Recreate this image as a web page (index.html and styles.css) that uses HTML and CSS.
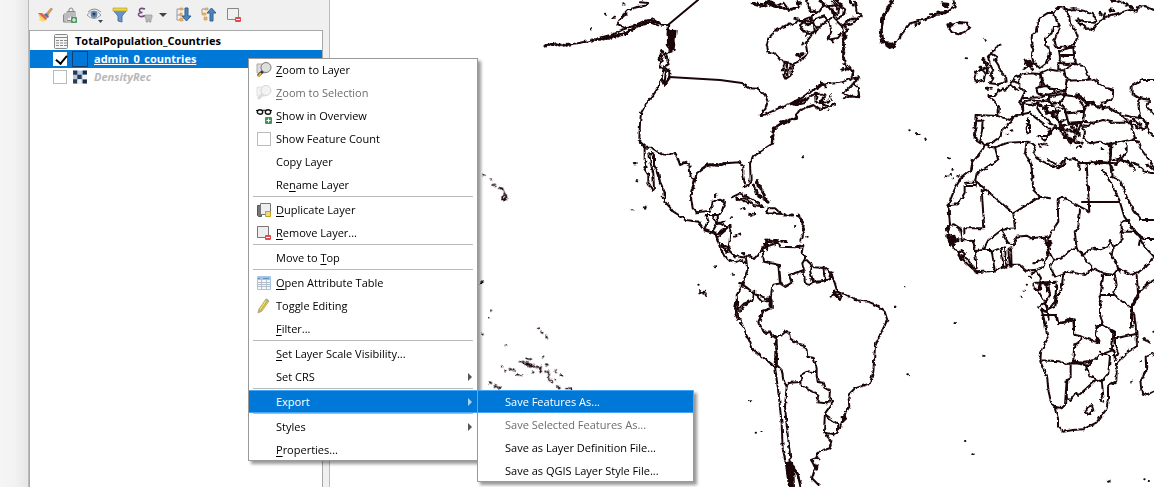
FILE: index.html
```html
<!DOCTYPE html>
<html lang="en">
<head>
<meta charset="utf-8">
<title>Layers</title>
<link rel="stylesheet" href="styles.css">
</head>
<body>
<div class="app">
  <div class="gutter"></div>
  <aside class="panel">
    <div class="toolbar">
      <button aria-label="Style"><svg class="icon" viewBox="0 0 16 16"><path d="M9 7l5-6 1.500 1-4.500 6z" fill="#d9a15b" stroke="#b57a35" stroke-width=".6"/><path d="M1 6l8 1 2 3-3 4-4-1z" fill="#f2c53d"/><path d="M1 6l4 0 5 5-1 2z" fill="#e2605a"/><path d="M3 10l4 2-1 3-4-2z" fill="#f4dc79"/><path d="M9 6l3 3-1 2-4-3z" fill="#4b74b5"/></svg></button>
      <button aria-label="Add group"><svg class="icon" viewBox="0 0 16 16" fill="none" stroke="#888"><path d="M5 4.500h8v9H5zM3 6v9h8M1.500 7.500V15H3M7 11V3a2 2 0 0 1 4 0v6a1 1 0 0 1-2 0V4"/><rect x="9" y="10" width="6" height="6" rx="1" fill="#4c9a62" stroke="none"/><path d="M12 11v4M10 13h4" stroke="#fff"/></svg></button>
      <button aria-label="Map themes"><svg class="icon" viewBox="0 0 16 16"><path d="M0 8q7-8 14 0-7 7-14 0z" fill="#f5f5f5" stroke="#999"/><path d="M1 5q6-6 13 0" fill="none" stroke="#888"/><circle cx="7" cy="7.500" r="3.400" fill="#6289b6"/><circle cx="7" cy="7" r="1.500" fill="#233f60"/><path d="M11 13h5l-2.500 3z" fill="#444"/></svg></button>
      <button aria-label="Filter"><svg class="icon" viewBox="0 0 16 16"><path d="M1 3h14l-5 6v6l-4-1V9z" fill="#6692c4" stroke="#4a78ac"/><path d="M1 1h14v3H1z" fill="#f1d43e" stroke="#b6a136" stroke-width=".7"/></svg></button>
      <button aria-label="Filter by expression"><svg class="icon wide-icon" viewBox="0 0 30 16"><path d="M8 2Q2 0 2.500 4q.5 1.500 3 1.500Q1 5.500 1.500 8 3 11 8 8.500" fill="none" stroke="#71477d" stroke-width="1.600"/><path d="M8 8h7v3l-1 1v3h-2v-3h-1v3H9v-3l-1-1z" fill="#bbb" stroke="#999" stroke-width=".7"/><path d="M22 6h8l-4 4z" fill="#444"/></svg></button>
      <button aria-label="Expand all"><svg class="icon" viewBox="0 0 16 16"><path d="M1 2h3M1 2v11h3M1 8h3" stroke="#999" fill="none"/><path d="M4 1h3v2H4zM4 6h2v3H4zM4 11h3v3H4z" fill="#e7b66d" stroke="#d59b50" stroke-width=".7"/><path d="M9 1h3v8h3L10.500 14 6 9h3z" fill="#4e85bd" stroke="#315f8f"/></svg></button>
      <button aria-label="Collapse all"><svg class="icon" viewBox="0 0 16 16"><path d="M1 2h3M1 2v4" stroke="#999" fill="none"/><path d="M4 1h3v2H4zM1 6h4v2H1zM3 10h3v3H3z" fill="#e7b66d" stroke="#d59b50" stroke-width=".7"/><path d="M9 14h3V6h3L10.500 1 6 6h3z" fill="#4e85bd" stroke="#315f8f"/></svg></button>
      <button aria-label="Remove layer"><svg class="icon" viewBox="0 0 16 16"><path d="M1.500 1.500h11v11h-11z" fill="#f0f0f0" stroke="#888"/><rect x="9" y="10" width="6" height="5" rx="1" fill="#e24850"/><path d="M10 12.500h4" stroke="#fff"/></svg></button>
    </div>
    <ul class="tree">
      <li><svg class="icon" viewBox="0 0 16 16" fill="none" stroke="#888"><rect x="1.500" y="1.500" width="13" height="14" rx="1" fill="#f6f6f6"/><path d="M2 4.500h12M3 7.500h3M7 7.500h3M11 7.500h3M3 10h3M7 10h3M11 10h3M3 12.500h3M7 12.500h3M11 12.500h3"/></svg><span class="table-name">TotalPopulation_Countries</span></li>
      <li class="selected"><input type="checkbox" id="admin" checked><span class="swatch"></span><label for="admin">admin_0_countries</label></li>
      <li class="hidden-layer"><input type="checkbox" id="density"><svg class="raster" viewBox="0 0 15 14"><path d="M1 1h13v12H1z" fill="#b4c9e2"/><path d="M1 1h4v4H1zM5 5h4v4H5zM1 9h4v4H1z" fill="#293b55"/><path d="M10 1h4v4h-4zM10 9h4v4h-4z" fill="#1d2b40"/><path d="M5 9h4v4H5zM10 5h4v4h-4z" fill="#eef3f8"/></svg><label for="density">DensityRec</label></li>
    </ul>
  </aside>
  <main class="map">
    <svg viewBox="330 0 824 487" preserveAspectRatio="xMinYMin slice" role="img" aria-label="World map">
      <filter id="rough" x="330" y="0" width="824" height="487" filterUnits="userSpaceOnUse" color-interpolation-filters="sRGB"><feTurbulence type="fractalNoise" baseFrequency=".22" numOctaves="2" seed="4"/><feDisplacementMap in="SourceGraphic" scale="4" xChannelSelector="R" yChannelSelector="G"/></filter>
      <path d="M669 77l51 3 22 3M698 0l-30 25M1082 202h37"/>
      <g filter="url(#rough)">
      <!-- Alaska and western North America -->
      <g transform="translate(480 0) scale(.3333)">
        <path d="M262 135l20-4 43-7 35-11 40-10 30-15 30-10 35-16 27-4 23 16 20 2M335 120l45-7 60-15 35-18 35-12 25 8M410 95l30-10-28-13 13-22 15-18 30-10 25-5 10-8-25-2M545 235l-10 27-15 23-20 23-17 32-3 30-2 50 16 15v8h21l30 20 25 2 2-5 16 2 12 33 20-7 8 7 4 35 13 10 5-20 20-15 20-12 30 4M645 540l-10 30-5 30M494 443v37l6 20-10 2 15 23v25l13 22 4-4-2-48-8-30-4-28 7-7 7 10v30l13 25 5 30 15 30v20"/>
        <path class="fill" d="M563 85l10 8 14-1-6 55-12 5-5-20z"/>
        <path d="M568 75l-5 30 18-10-8 25 12 5-25 10 15 20-17 5 8 35-14 5 16 15v20l-13 20-10-20 5-25-10-10 8-30 8-15M548 205l10 10-5 35 12-15"/>
        <path class="coast" d="M195 138l10-5 55 3M335 120l55-5 50-15 28-20 28-12 30-3 14 4M545 155l-10 32M428 52l14-13M478 425l12 10"/>
        <path class="dots" d="M333 88l4-6M375 41h1M400 53h8M430 12l8 3M466 489h1M470 544h1M707 588h1M545 590l4 5"/>
      </g>
      <!-- Eastern North America and Greenland -->
      <g transform="translate(700 0) scale(.3333)">
        <path d="M125 250l25 15 25 1 20 19 8 20-6 20-15 20 13-1 40-19 35-13 40-22 50-35 60-7 35-12 22-5-17 20-30 30 20 8 28 3-4-30-16-12 20-14M0 510l20-15 40 2 15-7 45-3 10 13v30l5 20-7 12 17-4 7-18-2-50 10-20 25-18 30-20 3-37 17-20 55-20-2-10 12-15 40-15 20 15 45-20-20 10-35-15-2-25-65 35M272 312l55-20-15 18-25 5zM270 70l-40 20-25 25-5 20 5 20 20 5 15 20 22 4-2 25-10 15 8 12 14-10 10-35 25-12 15-20-5-30 15-20 12-20-5-30 35-10 15 20 5 25-10 25 30-5 15-20-3-15-25-25-5-20 15 20 20-7 5-18-20-15-30 5M430 110v70l10 20 20 15-8 25M255 80l40-15 40-15 25-20 10-20-10-15M345 100l10-18 25-20 35-20 3-20-15-20M427 110l15-20-10-15 25-5 28-20-15-15-5-30M580 0l-15 30-15 25-5 35 5 35 30 15 20-30 30-40 20-5 40-12 25-15 29-3M350 80l-30-20-20 15 10 20M395 5l20 25 10-15-15-15"/>
        <path class="coast" d="M218 430l2-45 25-18M290 355l-55 12M160 10l35 5 10-10 30 15 35 10 25-10 5-15M320 0l10 30 15 5M360 5l30 20 20 15M285 55l45 20 5-25M310 90l20 10 15-5M250 210l5-25 20 10-15 30M290 165l20-5-15 15M430 75l15-15 25-5M450 5l15 15M575 5l-15 25-15 25-3 65M350 280l25 5-15 25 30-8M425 210l25-7M430 293l25-5M365 250l15 15M330 275l35-20M430 112l2 75M645 75l15-5"/>
        <path d="M155 12l30 8 15-15 25 15 25-12 15 20 30-5-5-20M205 0l5 15 30 5"/>
        <path class="fill" d="M545 125l30 3 7 12-10 4zM430 100l10 10-8 6z"/>
        <path class="dots" d="M308 472h1M388 330h1M628 391h1M648 403l15-2M676 413l4 10M310 130l-5 6M318 108l5-5M390 285l6 15M395 120l5 5M48 587h1"/>
      </g>
      <!-- Central America and northern South America -->
      <g transform="translate(640 150) scale(.3333)">
        <path d="M50 65l10 30 13 30 2 30 25 30 40 25 35 5 15 20 35 12 15 45 15 30 30 15 20-8 12 10M165 90l-12 50 5 35 12 12 40-5 8-27 22-6 15 6-10 30-12 15 2 18 20 10 17 0-3 45-5 25 20 20 35 5 8-8 15 12 30-35 30-10M318 325l4 35-17 50M200 195h30M200 195l5 20-15 25 25 8 15-25 20-8M215 248l20 2 30-20M232 262l33-28M245 285l25 10M385 275l-18 15 5 45 45 10 5 55-25 5-5 45-50-20-25-20-20-10M385 275l30 5 5 10 45 2 25-5-5 20 12 20 25 25 40 3 15 20 15 50M415 345l5 55 15 10 20-12-8-23 45-15-5-20 12-20M490 355l5 45 15 5 10-8-10-35 5-20M525 395l30-3-5-40M550 392l20-5 5-20M525 395l-15-8M305 410l-15 25 3 45 20-20 25-10 5-28M340 425l25 30 25-2 5 20-30 10-5 27M290 475l-5 15 10 20M575 440l10-15 20 5-5 20-15-15 25-5 30 15"/>
        <path d="M275 142l25-12 40 20 30 20-30-5-25-20-25 5M385 175l-5 15 45 2-20-17z"/>
        <path class="coast" d="M330 193h15M432 195h30M475 195l14 25 2 25-10 30M350 95l15 25 15 30M340 105l15 30 30 22M390 270l50 5M380 270v35M475 290l15-5M218 200l12 20M245 287l22 27M283 318l7 8M310 308l5 12M290 145l35 15M580 430l20 15M390 440v30M205 45l40-2 15-5"/>
        <path class="dots" d="M488 22h1M228 136h1M272 202h1M300 179l14-4M465 228h1M502 260h1M285 260l20-8M225 352h1M278 374h1M175 404h1M178 430l15-5 5 12M795 412h1M765 470h1M15 176l2-6M66 140l5 4M180 423l10 8"/>
      </g>
      <!-- Southern South America -->
      <g transform="translate(700 300) scale(.3333)">
        <path d="M110 0l-5 25 55 125 65 50 10 75 10 95 3 75 10 45 15 20 5 77M105 25l15 10 15-20 15-12M215 0v25l-25 10-15 30 10 25 15 10 10-6 5 15 15 1 15-5 15-12 8 10 2 12 20 15 20 5 10 15 2 20 20 5 8 30v20l3 20 15 3 5 15 17 10-3 30-10 7-25-3 3-23-50-25-2-35 20-10 25 3M230 110v85l15 15 5 30 10 20 10-12 30-2M260 260l-5 60 5 55 8 70 5 50 20 25 8 40M390 290l10 15-25 35-3 55 22 30-5 20-33 10-8 20-15 5 13 22-10 33 20 20M375 345l40 28-2 25-10 5-30-5M420 385l10-35 18-30-3-35 20-20 45-15 10-35 5-75 15-35 22-45-8-25-25-20-25-10-40-5"/>
        <path class="fill" d="M258 490l18-3 4 30 2 43h-15l-5-35zM425 350l10-5 2 12-10 10zM341 495l12 2-3 12z"/>
        <path class="coast" d="M225 110l6 45-3 45M350 460l5 15M260 490l20 10 18 40"/>
        <path class="dots" d="M150 304h1M167 398h1M184 396h1M585 20h1M622 223h6M465 3l8 2"/>
      </g>
      <!-- Europe and western Asia -->
      <g transform="translate(930 0) scale(.3333)">
        <path d="M0 43L45 40 75 20 70 0M52 75L75 72 85 66 112 68 118 82 105 95 85 103 65 97zM310 185L305 165 310 150 304 135 306 105 318 95 322 70 332 52 355 38 372 40 382 25 400 22 415 30 432 27 460 32 485 42 498 55 495 68 470 66 445 58M440 62L455 72 470 85 490 88 500 75 508 65 520 58 525 40M520 58L545 45 570 38 600 30 620 35 625 20 645 18 672 30M372 42L380 60 385 75 372 80 368 100 345 115 345 135 355 142 360 165 350 190 330 205 318 195 310 185M385 75L390 85 380 105 372 125 375 142 400 140 420 140 435 128 443 110 435 90 420 70 418 50 412 35M435 142L408 146 388 155 390 175 385 192 385 210M430 142L432 165 438 190 410 192 385 188M395 165L432 165"/>
        <path d="M332 218L355 208 380 212 402 210 410 240 405 270 385 268 345 258 335 240zM402 210L435 192 462 198 470 215 478 232 465 240 410 242M410 242L405 285 440 290 455 288 470 310 490 305 500 320 515 318M465 240L490 238 505 248 530 265 550 270 548 295 530 305 512 308 518 325 535 322M268 225L300 220 330 222 335 258 318 265 325 282 345 288 330 292 275 295 285 275 268 260zM268 225L252 235 238 255 265 270M250 245L268 250M238 255L228 268 205 275 195 288 175 288 190 300 207 320 205 345M275 295L270 310 278 320 275 345 250 350 240 360 205 348 140 345M278 308L300 300 330 305 355 300 360 285 345 282M318 265L345 258 375 270 370 280 345 285 325 280zM355 300L365 288 395 282 405 290 390 308 365 312zM370 280L405 272 400 288"/>
        <path d="M275 345L280 330 278 312 300 315 325 310 322 325 335 345 355 362 375 378 382 385 368 383 362 400 352 410 360 392 340 370 315 352 298 338 280 342M325 408L352 408 345 422zM290 375h10v25h-10zM294 355v14M335 315L350 330 370 350 388 368 392 395 408 415 425 430M345 318L375 318 385 345 370 352M385 320L405 330 412 355 395 365M405 330L415 340 462 335 460 365 415 368 412 355M440 290L462 320 462 335M390 308L410 330M392 395L400 375 430 372 455 368 440 400M460 365L490 368 520 360 550 368 580 368 595 365 575 345 535 322M462 335L472 310M455 375L465 395 460 415 480 430 510 425 535 435 560 428 600 420 615 415 605 375 595 365M455 375L475 378 490 368M140 345L138 370 132 405 138 420 155 430 170 432 190 425 212 410 215 390 245 365 250 352M140 362h18l-2 30-5 30M580 345L605 350 635 355 655 370M600 365L620 380 640 390 655 370M672 240L635 240 605 258 605 280 630 295 625 315 630 345 650 375 655 395 672 410M630 295L660 300 650 320 672 345"/>
        <path d="M125 510L130 485 160 445 165 432 180 440 195 442 235 428 290 425 305 428M195 442L205 480 180 495M290 425L285 460 300 485 308 505M305 428L318 440 310 460 320 475 350 490 385 505 402 495 405 478 430 475 450 488 500 490 540 490M448 488V510M545 430L540 490 550 510M550 480L575 475 590 455 590 430M600 420L628 425 635 450 672 500M575 480L600 490 615 510M180 250L205 253 230 245 228 230 212 215 205 195 195 180 200 170 185 160 175 175 180 195 190 210 180 225 190 235zM138 215L155 205 165 220 162 240 142 248 133 235z"/>
        <path class="coast" d="M160 175l15 30-5 15M175 170l32-35M285 180l25 35M285 205l30-15M290 185l20 5M330 315l45 30 15 25M350 340l35-5M425 380l25 30M390 365l20 45 20 15 30 5M410 390l40 10M440 375l-5 45M205 270l20-5M440 285l20 15 15 15M485 310l25 15M541 435v60M510 40l15 10M540 30h15M465 85l25 5M620 380l20 5M610 360l25 15M548 0l40 10 20 15M170 265h20M150 205h35M135 370v45"/>
        <path class="fill" d="M285 190l12-8 10 10-7 8zM35 10l20 2-5 10zM55 70l8 0-3 12z"/>
        <path class="dots" d="M163 119l7 5M110 175h1M356 180l2-10M400 165l3 10M325 430l25 5M330 440h1M440 443l20-3M515 447h12M55 474l8 2M67 509h1M230 402h3M245 392l8-2"/>
      </g>
      <!-- North and central Africa -->
      <g transform="translate(930 160) scale(.3333)">
        <path d="M128 0l-5 30-30 25-18 30-20 50 5 60-10 10 15 50 40 50 35 32 55-5 45-18 28 0 20 18 30-3 15 25-8 40 18 30 10 25 3 30M135 65l5-25 40-25 25-15M105 68h30M103 78h30M137 65v15M104 78v20l-20 35-32 3M140 65l110 95 80-50-20-20-5-65-5-25M155 90l8 115h-60v15M165 90l-10 5M250 160l5 45-40 5-40 30-15 30-25 3-5-30-35-3-5-35-18-12-12 2-10 20M215 210l15 35 20 10 10-25 30-3 15 8 40-5 15 0 5-15 20-30-2-65 10-10 85 45-8-145 35-5 50 5 15-15 1-8M330 110l30 5M355 0l35 20 10-20M518 30l25 40 25 50 15 50 30 40 20 25M545 50l25 10 20 50 20 40 25 30M540 0l5 50M555 15l20-15 50 15 20 20 27 5M450 150l-5 50-10 20 5 45 20 20 25-20 20 5 30-10 5-20 10 20-5 25 25 50M550 290l-10-10M565 325l-15 20-35 0M565 325l40 20 20-10 12-5 35-40M630 180h42M640 237h32M580 215h35l15 20-3 20M595 180l-20 5v55l-25 25M630 235l10 20 32 35M455 285l35 40 30 15 30 5M355 235v45l-15 40-35 20M360 280l10 20 25-5 20-20 25-15M370 300l-10 20 15 30 40-15 50 10 25-20M310 310l30-10M315 368l65-3-5 60-25 30-15-5M400 340l-5 45-15 30-5 25-30 15M330 370l25 0 5 35-15 25-20 10M310 375l5 15 15 0 2-20M340 465h35l10 25 25-5 10-10 15 5v30M520 345l-5 35-5 40 0 45 10 30-20 5 0 15M555 345l5 30-10 30h-35M550 405l55 40 20-35-5-65M605 440l20-40 30-30 17-10M195 335l-10-60 30-12 5 60M135 275l5 50M85 280l10-10 10 10-10 20-10-15 25 10 15 20 10 20M165 270h20M225 265l5 55M240 320l-5-50 10-5M245 320l-2-55M345 235l10 40-5 15"/>
        <path class="coast" d="M55 235l20-3M60 250l15 5M605 200l15 20 20 15M355 230l8 40M510 410l2 40M50 228l40 13M650 15l20 10M605 450v50M345 370l10 20"/>
        <path class="fill" d="M53 230l20-3 5 15-18 12z"/>
        <path class="dots" d="M45 50l15-5M85 50l3-10M68 55h1M300 350l8 8M281 392h1M272 410h1M290 374h1M74 490h1"/>
      </g>
      <!-- Southern Africa -->
      <g transform="translate(930 310) scale(.3333)">
        <path d="M335 0l10 40 8 45-20 40-2 30 20 45 5 45 8 35 10 10 10 35v25l15 15 30-5 30-2 40-20 30-40 5-30 0-40 25-15 2-55 30-30 30-20-2-45-5-40-8-40M335 15h45l5 25 20-3 5-10 20 5 3 42 20 5-5 20-15 5-3 45 15 12 30-5 10-5M333 151l55 3 20 8 45-4M453 80l30 10 20 10 5-8-10-15 2-30 15-5 30 20 5 15-5 45-40 15-30 30-25-5M545 60l10 5 0 40 10 25-10 20-5-30-10-5M555 85l60-12M510 125l30 15-5 50-20 25-35-15-15-40M497 210l-50 45-10-5-15 20-12-5 2-55 10-5v-45M375 290l20 5 10-10 5-75M515 210l5 50M515 260l-5 10 10 8M485 285l5 15-15 15-10-8 8-15z"/>
        <path d="M672 130l-25 10 2 40-18 35 5 35 15 5 21-10"/>
        <path class="coast" d="M430 155l30 5M500 90l8 10M605 0v50M335 0l20 5"/>
        <path class="dots" d="M74 40h1M160 137h1M105 393h1M127 433h1M534 515l5-1M643 508h1M656 513h1M640 85l15 10M632 153h1M604 215h1M645 90l15 8M670 65h1"/>
      </g>
      <!-- Pacific islands -->
      <g transform="translate(478 150) scale(.3333)">
        <path class="dots" d="M16 77h1M38 88h1M46 105l10-2M65 113l8 5M470 40h1M476 94h1M462 181h1M501 175l2-5M38 482h1M31 505h1M16 553h1M83 587h1M183 535h1M190 545l5 6M205 560l3 8M195 620h1M145 626l14 2M72 650h1M82 664h1M188 667v-20M165 667h1M204 643l8 2M202 665h1M233 663h1M248 676l10 2M233 688h1M240 711h5M264 717l14 1M35 697l10 5M122 633l35 10 25 12 8 12M95 657l15 5M117 673l13 3M50 708l15 6M210 665v20l12 12M150 640l10 10M135 635l20 15M72 115l8 15"/>
        <circle cx="79" cy="143" r="6"/><circle class="fill" cx="12" cy="396" r="2"/>
      </g>
      </g>
    </svg>
  </main>
</div>

<ul class="menu context-menu">
  <li><button><svg class="icon" viewBox="0 0 16 16"><path d="M1 2h8v9H1z" fill="#ddd" stroke="#aaa"/><path d="M7 9l-5 5" stroke="#333" stroke-width="3"/><path d="M5 11l-3 4" stroke="#efb942" stroke-width="2"/><circle cx="10" cy="5.500" r="5" fill="#dedfdc" stroke="#777"/></svg><span><u>Z</u>oom to Layer</span></button></li>
  <li><button disabled><svg class="icon" viewBox="0 0 16 16" opacity=".35"><path d="M1 2h8v9H1z" fill="#ddd" stroke="#aaa"/><path d="M7 9l-5 5" stroke="#999" stroke-width="3"/><circle cx="10" cy="5.500" r="5" fill="#dedfdc" stroke="#888"/></svg><span><u>Z</u>oom to Selection</span></button></li>
  <li><button><svg class="icon" viewBox="0 0 16 16" fill="none" stroke="#111"><path d="M0 2.500h2M6 3q2-2 4 0M14 2.500h2"/><ellipse cx="4" cy="4" rx="2.700" ry="2.200" stroke-width="1.400"/><ellipse cx="12" cy="4" rx="2.700" ry="2.200" stroke-width="1.400"/><rect x="9" y="9" width="7" height="7" rx="1" fill="#48905d" stroke="none"/><path d="M12.500 10.500v4M10.500 12.500h4" stroke="#fff"/></svg><span><u>S</u>how in Overview</span></button></li>
  <li class="check-item"><input type="checkbox" id="count"><label for="count">Show Feature Count</label></li>
  <li><button><span class="icon"></span><span>Copy Layer</span></button></li>
  <li><button><span class="icon"></span><span>Re<u>n</u>ame Layer</span></button></li>
  <li class="separator"></li>
  <li><button><svg class="icon" viewBox="0 0 16 16"><path d="M1.500 3.500h4v11h-3l-1-1z" fill="#777" stroke="#555"/><path d="M4.500 1.500h10v11h-10z" fill="#eee" stroke="#777"/><path d="M9.500 9.500h5v5h-5z" fill="#eedb7c" stroke="#c79f20"/></svg><span><u>D</u>uplicate Layer</span></button></li>
  <li><button><svg class="icon" viewBox="0 0 16 16"><path d="M1.500 1.500h11v11h-11z" fill="#eee" stroke="#777"/><rect x="9" y="10" width="6" height="5" rx="1" fill="#e24850"/><path d="M10 12.500h4" stroke="#fff"/></svg><span><u>R</u>emove Layer...</span></button></li>
  <li class="separator"></li>
  <li><button><span class="icon"></span><span>Move to <u>T</u>op</span></button></li>
  <li class="separator"></li>
  <li><button><svg class="icon" viewBox="0 0 16 16"><rect x="1" y="1" width="14" height="14" rx="1" fill="#a7c4e3"/><path d="M2 5h3v9H2zM6 5h4v9H6zM11 5h3v9h-3z" fill="#f4f7fb"/><path d="M2 3.500h2M7 3.500h6" stroke="#5d8fc3"/><path d="M2 7.500h12M2 9.500h12M2 11.500h12" stroke="#b4bfca"/></svg><span><u>O</u>pen Attribute Table</span></button></li>
  <li><button><svg class="icon" viewBox="0 0 16 16"><path d="M2 15l1-4 7-10 3 2-7 10z" fill="#eddb66" stroke="#9d913c" stroke-width=".7"/><path d="M5 12l7-10" stroke="#b9a636"/><path d="M9 2l1-1.500L13 2l-1 2zM2 15l1-4 3 2z" fill="#aaa"/></svg><span>Toggle Editing</span></button></li>
  <li><button><span class="icon"></span><span><u>F</u>ilter...</span></button></li>
  <li class="separator"></li>
  <li><button><span class="icon"></span><span><u>S</u>et Layer Scale Visibility...</span></button></li>
  <li class="parent"><button><span class="icon"></span><span>Set CRS</span></button></li>
  <li class="separator"></li>
  <li class="parent open"><button class="active"><span class="icon"></span><span>Export</span></button>
    <ul class="menu submenu">
      <li><button class="active">Save Features As...</button></li>
      <li><button disabled>Save Selected Features As...</button></li>
      <li><button>Save as Layer Definition File...</button></li>
      <li><button>Save as QGIS Layer Style File...</button></li>
    </ul>
  </li>
  <li class="separator"></li>
  <li class="parent"><button><span class="icon"></span><span>Styles</span></button></li>
  <li><button><span class="icon"></span><span><u>P</u>roperties...</span></button></li>
</ul>
</body>
</html>
```
FILE: styles.css
```css
* { box-sizing: border-box; }
body { margin: 0; font: 11px/18px "Open Sans", "Noto Sans", sans-serif; color: #000; background: #fff; overflow: hidden; }
ul { list-style: none; margin: 0; padding: 0; }
button { font: inherit; color: inherit; background: none; border: 0; padding: 0; text-align: left; }
input { appearance: none; width: 14px; height: 14px; margin: 0; border: 1px solid #bbb; background: #fff; flex: none; }
.icon { width: 16px; height: 16px; flex: none; display: block; }
.app { display: grid; grid-template-columns: 29px 301px 1fr; height: 100vh; }
.gutter { background: linear-gradient(90deg, #f5f5f5, #f3f3f3 50%, #e6e6e6); border-right: 1px solid #bbb; }
.panel { display: flex; flex-direction: column; padding-right: 6px; background: #f0f0f0; border-right: 1px solid #bbb; }
.toolbar { display: flex; gap: 9px; height: 30px; padding: 6px 8px; }
.wide-icon { width: 30px; }
.tree { flex: 1; background: #fff; border: 1px solid #a8a8a8; border-bottom: 0; padding-top: 1px; }
.tree li { display: flex; align-items: center; gap: 5px; height: 18px; padding-left: 23px; }
.table-name, .tree label { font-weight: 700; padding-left: 1px; }
.tree .selected { background: #0078d7; color: #fff; }
.selected label { text-decoration: underline; }
.hidden-layer label { font-style: italic; color: #b8b8b8; }
.swatch, .raster { width: 16px; height: 16px; flex: none; }
.swatch { border: 1px solid #123d70; }
input:checked { border-color: #fff; }
input:checked::after { content: ""; display: block; width: 5px; height: 9px; margin: 0 0 0 4px; border: solid #000; border-width: 0 2px 2px 0; transform: rotate(40deg); }
.map { overflow: hidden; }
.map svg { display: block; width: 100%; height: 100%; fill: none; stroke: #1a0508; stroke-width: 2; stroke-linejoin: round; stroke-linecap: round; }
.map g g { stroke-width: 6; }
.map .fill { fill: #1a0508; }
.map .coast { stroke-width: 9; stroke-dasharray: 4 9 1 8; }
.map .dots { stroke-width: 6; stroke-dasharray: 5 7; }
.menu { position: absolute; background: #fff; border: solid #999; border-width: 0 1px; box-shadow: inset 0 1px #999, inset 0 -1px #999, 3px 3px 3px #0006; }
.context-menu { left: 248px; top: 58px; width: 230px; }
.submenu { left: 228px; top: 0; width: 217px; }
.menu li { position: relative; }
.menu button, .check-item { display: flex; align-items: center; gap: 4px; width: 100%; height: 23px; padding-left: 7px; }
.check-item input { margin: 0 1px; }
.menu .submenu button { padding-left: 27px; }
.menu button:disabled { color: #6d6d6d; }
.menu .active { background: #0078d7; color: #fff; box-shadow: inset 0 1px #42a5f5, inset 0 -1px #42a5f5; }
.menu .separator { height: 2px; margin: 0 4px; border-top: 1px solid #bbb; }
.parent > button::after { content: ""; margin: 0 5px 0 auto; border: 4px solid transparent; border-left-color: #555; border-right: 0; }
.open > button::after { border-left-color: #a8d4f5; }
u { text-underline-offset: 2px; }
```
